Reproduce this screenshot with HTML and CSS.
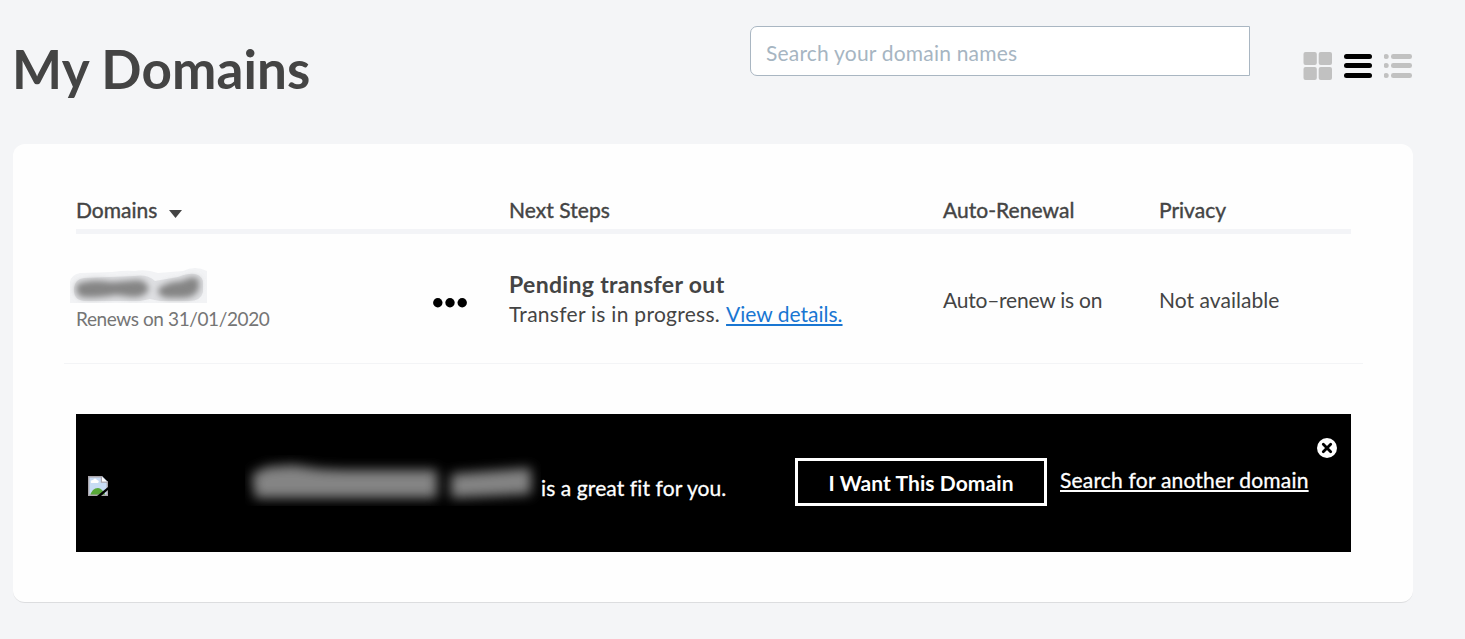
FILE: index.html
```html
<!DOCTYPE html>
<html lang="en">
<head>
<meta charset="utf-8">
<title>My Domains</title>
<link rel="stylesheet" href="styles.css">
</head>
<body>
<header class="header">
  <h1 class="title"><span>My Domains</span></h1>
  <input class="search" type="text" placeholder="Search your domain names">
  <nav class="views">
    <svg width="29" height="29" viewBox="0 0 29 29" fill="#c1c1c1"><rect x=".5" width="13.3" height="13" rx="2"/><rect x="15.7" width="13.3" height="13" rx="2"/><rect x=".5" y="15" width="13.3" height="13" rx="2"/><rect x="15.7" y="15" width="13.3" height="13" rx="2"/></svg>
    <svg width="28" height="29" viewBox="0 0 28 29"><rect y="2" width="28" height="5" rx="2.5"/><rect y="11" width="28" height="5" rx="2.5"/><rect y="21" width="28" height="5" rx="2.5"/></svg>
    <svg width="29" height="29" viewBox="0 0 29 29" fill="#c1c1c1"><circle cx="2.2" cy="4.5" r="2.5"/><circle cx="2.2" cy="13.5" r="2.5"/><circle cx="2.2" cy="23.5" r="2.5"/><rect x="7" y="2" width="21" height="5" rx="2.3"/><rect x="7" y="11" width="21" height="5" rx="2.3"/><rect x="7" y="21" width="21" height="5" rx="2.3"/></svg>
  </nav>
</header>
<main class="card">
  <div class="row head">
    <div class="sort"><span class="t-domains">Domains</span><svg width="13" height="8" viewBox="0 0 13 8"><path d="M0 0H13L6.5 8Z" fill="#444"/></svg></div>
    <div><span class="t-next">Next Steps</span></div>
    <div><span class="t-auto">Auto-Renewal</span></div>
    <div><span class="t-privacy">Privacy</span></div>
  </div>
  <div class="row item">
    <div class="domain">
      <div class="domain-info">
        <svg class="redacted" width="137" height="35" viewBox="0 0 137 35">
          <defs><filter id="soft" x="-20%" y="-60%" width="140%" height="220%"><feGaussianBlur stdDeviation="3.4"/></filter></defs>
          <path fill="#f2f3f5" d="M0 35V14Q1 7 10 5L42 4Q55 2 65 3Q76 1 88 5L113 3Q125-3 137 3V35Z"/>
          <path fill="#dedfe2" d="M4 20Q5 11 14 10L65 8Q77 6 85 13L108 9Q129 1 133 13V24Q131 33 119 33H90L80 31L70 33H14Q3 32 4 20Z"/>
          <g filter="url(#soft)" fill="#858585"><path d="M7 16Q22 10 42 14L66 12Q76 11 79 21Q74 31 60 29L46 27Q24 31 11 29Q4 25 7 16Z"/><path d="M88 21Q98 13 112 13Q125 6 129 12V21Q125 30 112 30H97Q87 28 88 21Z"/></g>
        </svg>
        <span class="renews t-renews">Renews on 31/01/2020</span>
      </div>
      <svg class="dots" width="36" height="10" viewBox="0 0 36 10"><circle cx="5.8" cy="4.7" r="4.7"/><circle cx="18" cy="4.7" r="4.7"/><circle cx="30.2" cy="4.7" r="4.7"/></svg>
    </div>
    <div class="status">
      <strong class="t-pending">Pending transfer out</strong>
      <span class="progress"><span class="t-progress">Transfer is in progress.</span><a class="t-view" href="#">View details.</a></span>
    </div>
    <div class="cell"><span class="t-renew">Auto–renew is on</span></div>
    <div class="cell"><span class="t-not">Not available</span></div>
  </div>
  <section class="banner">
    <svg class="broken" width="20" height="20" viewBox="0 0 20 20"><path d="M0 0H14L20 6V20H0Z" fill="#c8dcf5"/><path d="M2 20Q4 12 10 12Q14 12 18 20Z" fill="#58a838"/><path d="M3 7Q2 4 5 4Q7 1 9 4Q12 5 10 7Z" fill="#fff"/><path d="M.7.7H13.5V6H19.3V19.3H.7Z" fill="none" stroke="#aaa5aa" stroke-width="1.4"/><path d="M14 1V5.5H19Z" fill="#fff"/><path d="M9 20L20 11V14L13 20Z" fill="#000"/></svg>
    <svg class="hidden-name" width="296" height="51" viewBox="0 0 296 51">
      <defs><filter id="haze" x="-10%" y="-80%" width="120%" height="260%"><feGaussianBlur stdDeviation="6"/></filter></defs>
      <g filter="url(#haze)" fill="#848484"><path d="M7 19L22 12L48 10L75 14L98 15L192 15V43L104 43L10 43Z"/><path d="M206 19L286 13V39L206 43Z"/></g>
    </svg>
    <span class="fit"><span class="t-fit">is a great fit for you.</span></span>
    <button class="want"><span class="t-want">I Want This Domain</span></button>
    <a class="another" href="#"><span class="t-another">Search for another domain</span></a>
    <svg class="close" width="20" height="20" viewBox="0 0 20 20"><circle cx="10" cy="10" r="10" fill="#fff"/><path d="M6.3 6.3L13.7 13.7M13.7 6.3L6.3 13.7" stroke="#000" stroke-width="2.8" stroke-linecap="round"/></svg>
  </section>
</main>
</body>
</html>
```
FILE: styles.css
```css
* { box-sizing: border-box; }
body { margin: 0; height: 639px; overflow: hidden; background: #f4f5f7; color: #444; font-family: Lato, "Open Sans", sans-serif; font-size: 21px; line-height: 30px; }
span, a, strong { white-space: nowrap; }
.header { display: flex; height: 144px; padding-left: 12px; align-items: flex-start; }
.title { width: 738px; margin: 39px 0 0; font-size: 53px; line-height: 60px; font-weight: 700; letter-spacing: .1px; }
.search { width: 500px; height: 50px; margin-top: 26px; padding: 2px 15px 0; border: 1px solid #a9b6c2; border-radius: 7px 0 0 7px; background: #fff; font: 21px Lato, sans-serif; letter-spacing: .2px; }
.search::placeholder { color: #a6b5c2; opacity: 1; }
.views { display: flex; gap: 12px; margin: 52px 0 0 53px; }
.card { width: 1400px; height: 459px; margin-left: 13px; padding: 51px 62px 0 63px; background: #fefefe; border-radius: 12px; border-bottom: 1px solid #dcdddf; }
.row { display: grid; grid-template-columns: 433px 434px 216px 192px; }
.head { height: 39px; border-bottom: 5px solid #f3f4f7; -webkit-text-stroke: .4px #444; }
.sort { display: flex; gap: 12px; align-items: flex-start; }
.sort svg { margin-top: 15px; }
.item { height: 130px; margin: 0 -12px; padding: 4px 12px 0; align-items: center; border-bottom: 1px solid #f3f4f6; }
.cell { margin-top: -2px; }
.domain { display: flex; justify-content: space-between; padding-right: 41px; align-items: center; }
.domain-info { display: flex; flex-direction: column; margin-top: 1px; }
.redacted { margin-left: -6px; }
.renews { color: #757575; font-size: 19px; line-height: 31px; }
.dots { margin-top: 4px; }
.status { display: flex; flex-direction: column; margin-top: -3px; }
.status strong { font-size: 23px; line-height: 30px; }
.progress { display: flex; gap: 6px; }
.t-next, .t-auto, .t-not { letter-spacing: .05px; }
.t-renews { letter-spacing: -.4px; }
.t-pending { letter-spacing: .33px; }
.t-progress { letter-spacing: .28px; }
.t-renew { letter-spacing: -.22px; }
.t-fit { letter-spacing: .1px; }
.t-want { letter-spacing: .07px; }
.t-another { letter-spacing: .2px; }
a { color: #1976d2; text-decoration: underline; text-decoration-thickness: 2px; text-underline-offset: 2px; text-decoration-skip-ink: none; }
.banner { display: flex; height: 138px; margin-top: 50px; padding-left: 12px; background: #000; color: #fff; }
.broken { margin-top: 62px; }
.hidden-name { margin: 41px 0 0 137px; }
.fit { width: 254px; margin-top: 59px; -webkit-text-stroke: .3px #fff; }
.want { width: 252px; height: 48px; margin-top: 44px; padding: 0; border: 3px solid #fff; background: #000; color: #fff; font: 700 21px Lato, sans-serif; }
.another { width: 257px; margin: 51px 0 0 13px; color: #fff; -webkit-text-stroke: .3px #fff; }
.close { margin-top: 24px; }
```
